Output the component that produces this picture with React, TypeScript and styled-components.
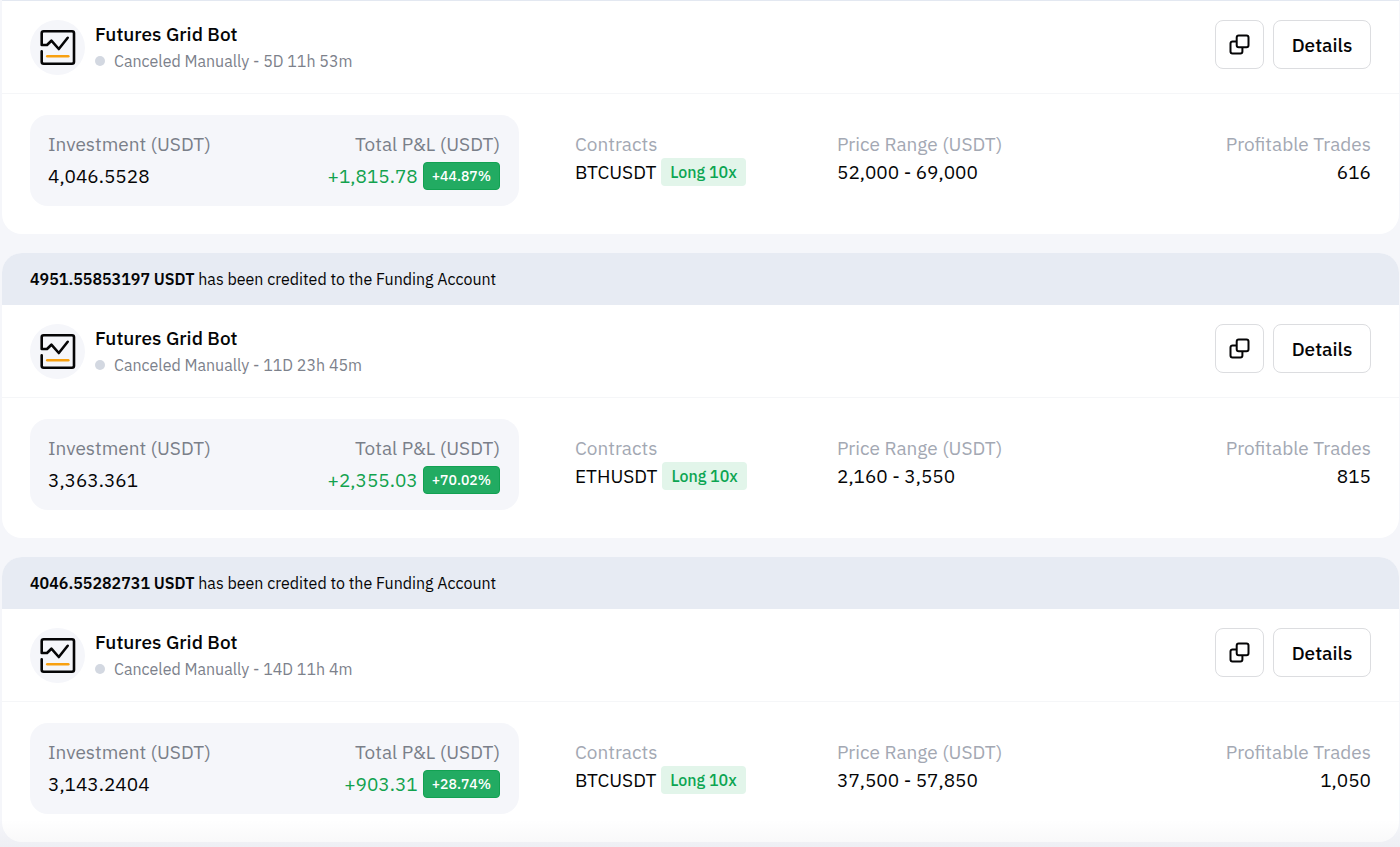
import React from "react";
import styled, { createGlobalStyle } from "styled-components";

const GlobalStyle = createGlobalStyle`
  *, *::before, *::after { box-sizing: border-box; }
  body {
    margin: 0;
    background: #f5f6fa;
    color: #050506;
    font-family: "IBM Plex Sans", Roboto, "Noto Sans", sans-serif;
    font-size: 19px;
    line-height: 28px;
  }
`;

const Page = styled.main`
  position: relative;
  display: flex;
  flex-direction: column;
  gap: 19px;
  padding: 0 1px 5px 2px;

  &::after {
    content: "";
    position: absolute;
    inset: auto 0 0 0;
    height: 28px;
    background: linear-gradient(rgba(20, 20, 50, 0), rgba(20, 20, 50, 0.03));
    pointer-events: none;
  }
`;

const Card = styled.article<{ $continued?: boolean }>`
  overflow: hidden;
  background: #ffffff;
  border-radius: ${(p) => (p.$continued ? "0 0 20px 20px" : "20px")};
  border-top: ${(p) => (p.$continued ? "1px solid #e3e8f1" : "none")};
`;

const Notice = styled.p`
  margin: 0;
  padding: 12px 28px;
  background: #e7ebf3;
  font-size: 16px;
`;

const Amount = styled.strong`
  font-weight: 600;
`;

const Header = styled.header`
  display: flex;
  align-items: flex-start;
  justify-content: space-between;
  padding: 19px 28px 18px;
  border-bottom: 1px solid #f5f6f8;
`;

const Identity = styled.div`
  display: flex;
  gap: 10px;
`;

const Avatar = styled.span`
  display: block;
  width: 55px;
  height: 55px;
  border-radius: 50%;
  background: #f5f6fa;

  svg { display: block; }
`;

const BotName = styled.h2`
  margin: 0;
  font-size: 19px;
  font-weight: 500;
  line-height: 28px;
`;

const Status = styled.p`
  display: flex;
  align-items: center;
  gap: 9px;
  margin: 0;
  color: #7c818b;
  font-size: 16px;
  line-height: 26px;

  &::before {
    content: "";
    width: 10px;
    height: 10px;
    border-radius: 50%;
    background: #d3d8e1;
  }
`;

const Actions = styled.div`
  display: flex;
  gap: 9px;
`;

const Button = styled.button<{ $square?: boolean }>`
  display: flex;
  align-items: center;
  justify-content: center;
  width: ${(p) => (p.$square ? "49px" : "98px")};
  height: 49px;
  padding: 0;
  border: 1px solid #dcdde0;
  border-radius: 8px;
  background: #ffffff;
  color: #050506;
  font: inherit;
  font-weight: 500;
  cursor: pointer;
`;

const Body = styled.div`
  display: grid;
  grid-template-columns: 489fr 796fr;
  column-gap: 56px;
  padding: 21px 28px 28px;
`;

const Summary = styled.dl`
  display: flex;
  justify-content: space-between;
  margin: 0;
  padding: 15px 19px 12px 18px;
  border-radius: 18px;
  background: #f5f6fa;
`;

const Facts = styled.dl`
  display: grid;
  grid-template-columns: 262fr 262fr 272fr;
  margin: 0;
  padding: 15px 0 12px;
`;

const Stat = styled.div<{ $end?: boolean }>`
  display: flex;
  flex-direction: column;
  align-items: ${(p) => (p.$end ? "flex-end" : "flex-start")};
`;

const Label = styled.dt<{ $strong?: boolean }>`
  color: ${(p) => (p.$strong ? "#7a7f89" : "#a3a8b3")};
`;

const Value = styled.dd<{ $tall?: boolean; $gain?: boolean }>`
  display: flex;
  align-items: center;
  gap: 5px;
  height: ${(p) => (p.$tall ? "36px" : "28px")};
  margin: 0;
  color: ${(p) => (p.$gain ? "#12a24e" : "#050506")};
`;

const PercentTag = styled.span`
  padding: 0 8px;
  border: 1px solid #12a152;
  border-radius: 4px;
  background: #22ab62;
  color: #ffffff;
  font-size: 14px;
  font-weight: 500;
  line-height: 26px;
`;

const SideTag = styled.span`
  padding: 0 9px;
  border-radius: 4px;
  background: #e2f5ea;
  color: #0ca552;
  font-size: 16px;
  font-weight: 500;
  line-height: 28px;
`;

const BotIcon = () => (
  <svg width="55" height="55" viewBox="0 0 55 55" fill="none" strokeWidth="2.6" strokeLinecap="round" strokeLinejoin="round" aria-hidden="true">
    <path
      d="M11.7 25V13.3a2 2 0 0 1 2-2H42a2 2 0 0 1 2 2v28.4a2 2 0 0 1-2 2H13.7a2 2 0 0 1-2-2V31.4M11.7 25H17l4.4-4.3 7.4 8.3 8.9-11.2"
      stroke="#050506"
    />
    <path d="M17.3 36.3h21" stroke="#f8a010" />
  </svg>
);

const CopyIcon = () => (
  <svg width="21" height="21" viewBox="0 0 21 21" fill="none" stroke="#050506" strokeWidth="2" strokeLinejoin="round" aria-hidden="true">
    <rect x="7.7" y="1.5" width="11.8" height="11.8" rx="2" />
    <path d="M7.7 7.4H3.5a2 2 0 0 0-2 2v8.1a2 2 0 0 0 2 2h7.9a2 2 0 0 0 2-2v-4.2" />
  </svg>
);

type Bot = {
  credited?: string;
  duration: string;
  investment: string;
  pnl: string;
  percent: string;
  contract: string;
  range: string;
  trades: string;
};

const bots: Bot[] = [
  { duration: "5D 11h 53m", investment: "4,046.5528", pnl: "+1,815.78", percent: "+44.87%", contract: "BTCUSDT", range: "52,000 - 69,000", trades: "616" },
  { credited: "4951.55853197 USDT", duration: "11D 23h 45m", investment: "3,363.361", pnl: "+2,355.03", percent: "+70.02%", contract: "ETHUSDT", range: "2,160 - 3,550", trades: "815" },
  { credited: "4046.55282731 USDT", duration: "14D 11h 4m", investment: "3,143.2404", pnl: "+903.31", percent: "+28.74%", contract: "BTCUSDT", range: "37,500 - 57,850", trades: "1,050" },
];

const BotCard = ({ bot }: { bot: Bot }) => (
  <Card $continued={!bot.credited}>
    {bot.credited && (
      <Notice>
        <Amount>{bot.credited}</Amount> has been credited to the Funding Account
      </Notice>
    )}
    <Header>
      <Identity>
        <Avatar><BotIcon /></Avatar>
        <div>
          <BotName>Futures Grid Bot</BotName>
          <Status>Canceled Manually - {bot.duration}</Status>
        </div>
      </Identity>
      <Actions>
        <Button type="button" $square aria-label="Copy bot"><CopyIcon /></Button>
        <Button type="button">Details</Button>
      </Actions>
    </Header>
    <Body>
      <Summary>
        <Stat>
          <Label $strong>Investment (USDT)</Label>
          <Value $tall>{bot.investment}</Value>
        </Stat>
        <Stat $end>
          <Label $strong>Total P&amp;L (USDT)</Label>
          <Value $tall $gain>{bot.pnl}<PercentTag>{bot.percent}</PercentTag></Value>
        </Stat>
      </Summary>
      <Facts>
        <Stat>
          <Label>Contracts</Label>
          <Value>{bot.contract}<SideTag>Long 10x</SideTag></Value>
        </Stat>
        <Stat>
          <Label>Price Range (USDT)</Label>
          <Value>{bot.range}</Value>
        </Stat>
        <Stat $end>
          <Label>Profitable Trades</Label>
          <Value>{bot.trades}</Value>
        </Stat>
      </Facts>
    </Body>
  </Card>
);

export default function App() {
  return (
    <>
      <GlobalStyle />
      <Page>
        {bots.map((bot) => <BotCard key={bot.duration} bot={bot} />)}
      </Page>
    </>
  );
}
